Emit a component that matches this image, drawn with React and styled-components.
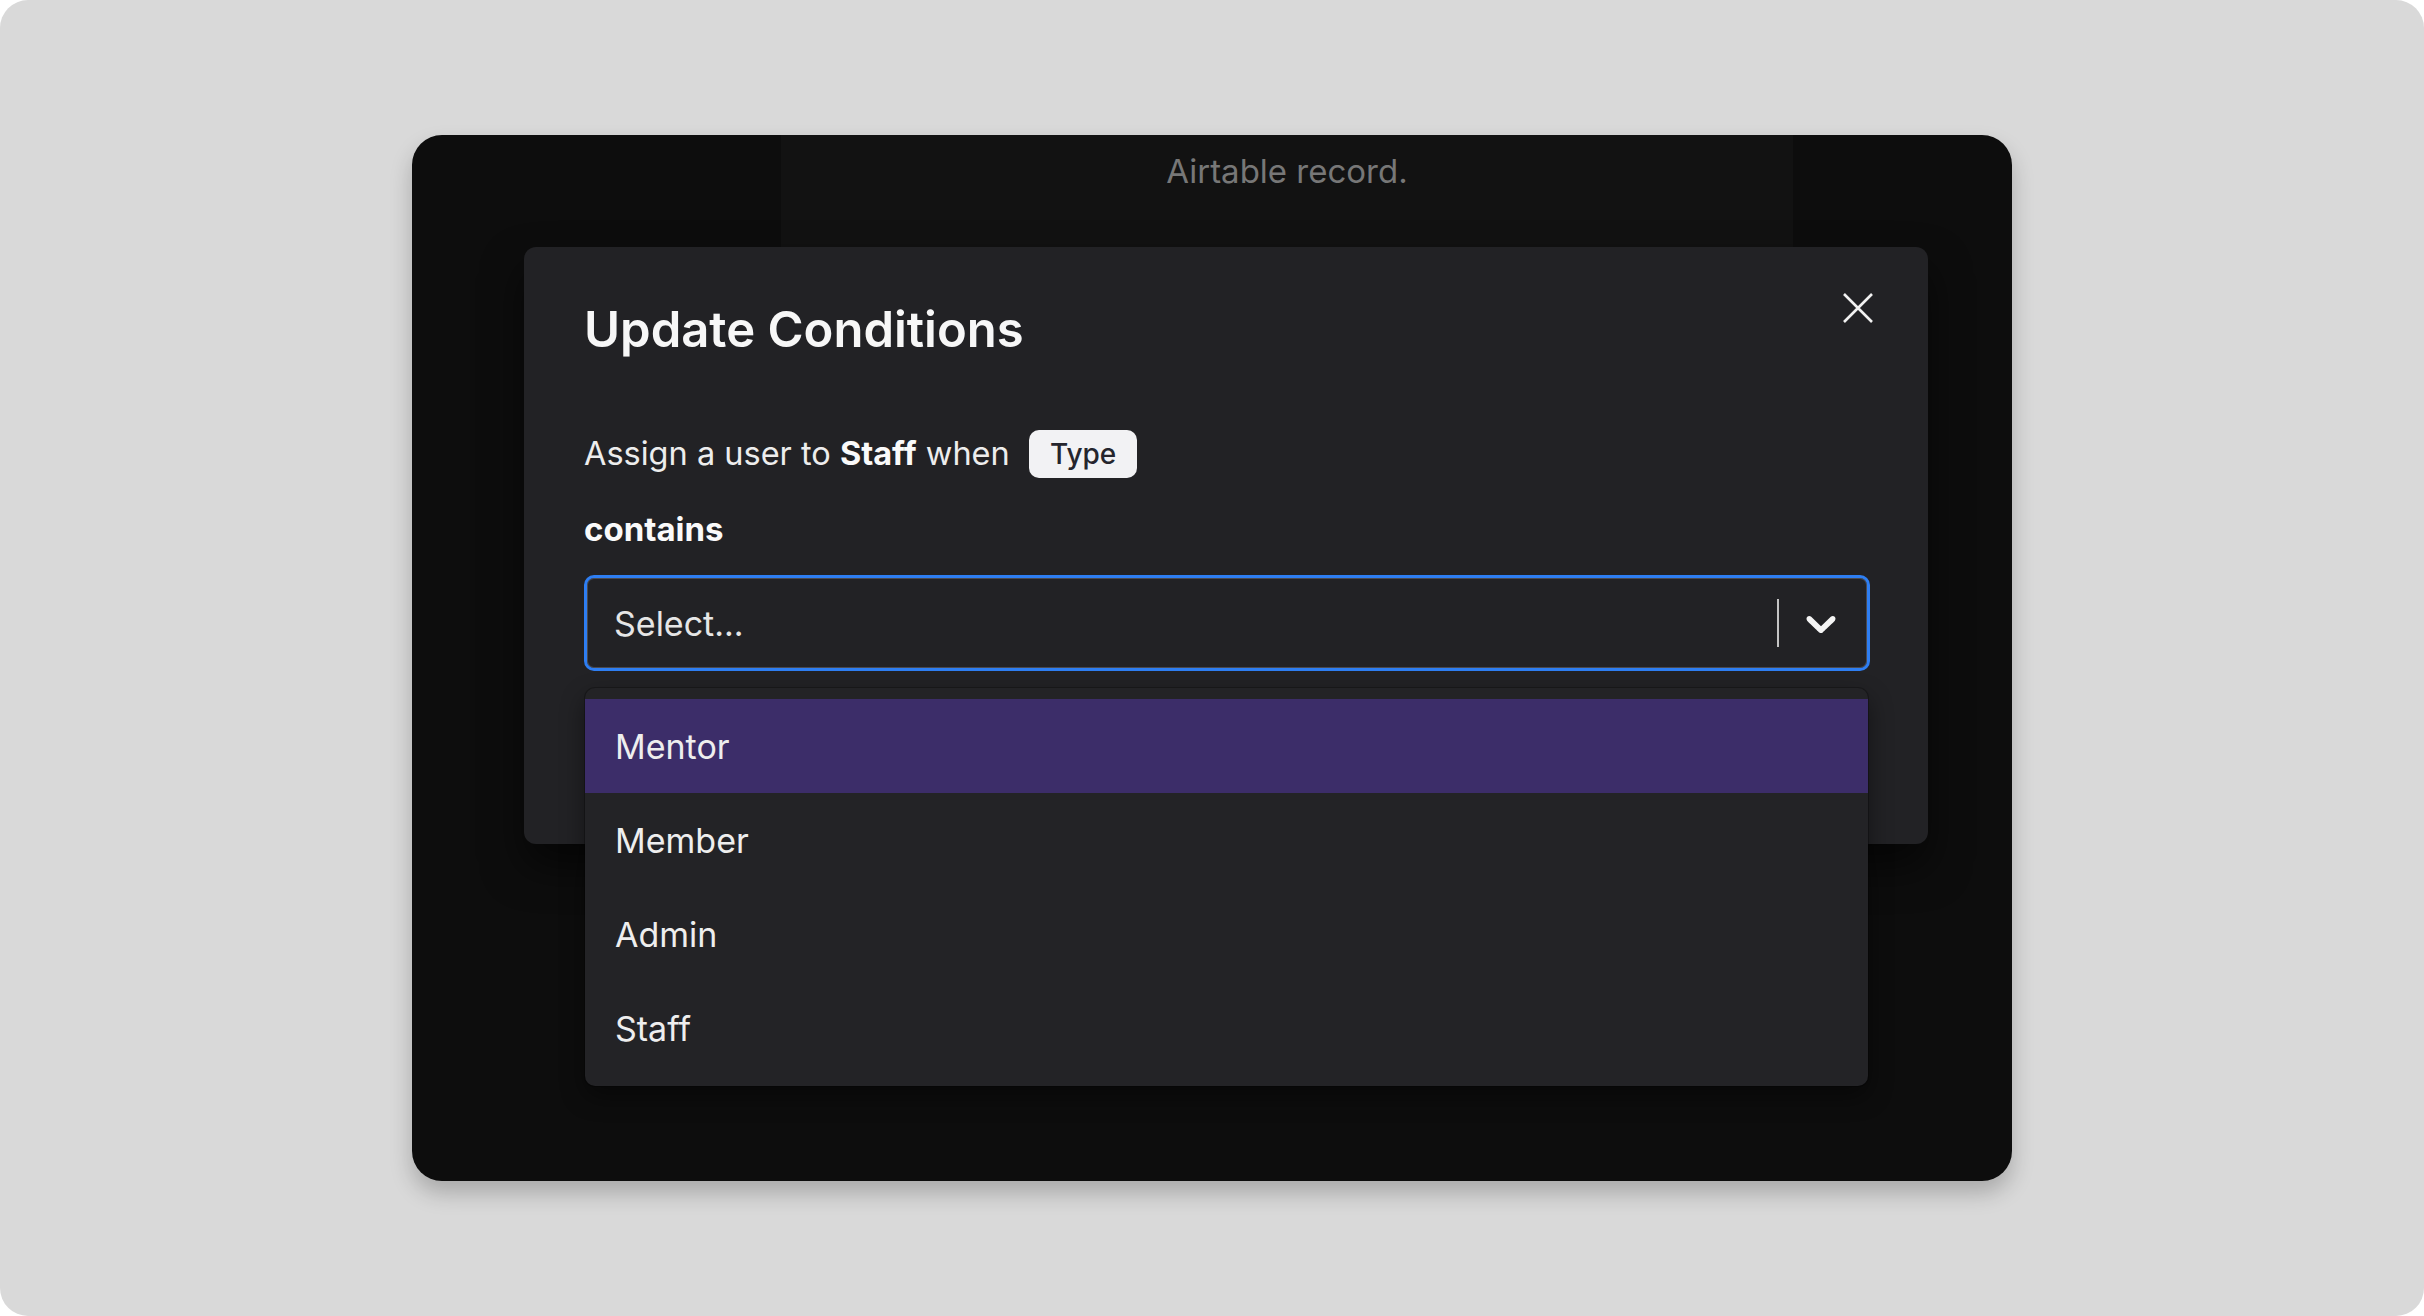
import React, { useState } from 'react';
import styled, { createGlobalStyle } from 'styled-components';

const GlobalStyle = createGlobalStyle`
  html, body {
    margin: 0;
    padding: 0;
    background: #ffffff;
  }
  body {
    font-family: Inter, "Noto Sans", sans-serif;
    -webkit-font-smoothing: antialiased;
  }
`;

const Page = styled.div`
  width: 2424px;
  height: 1316px;
  background: #d9d9d9;
  border-radius: 28px;
  display: flex;
  align-items: center;
  justify-content: center;
`;

const Frame = styled.div`
  width: 1600px;
  height: 1046px;
  background: #0d0d0d;
  border-radius: 30px;
  box-shadow: 0 12px 22px rgba(0, 0, 0, 0.22);
  display: flex;
  flex-direction: column;
  overflow: hidden;
`;

const BackStrip = styled.div`
  margin-left: 369px;
  width: 1012px;
  height: 112px;
  box-sizing: border-box;
  padding-top: 12px;
  background: #121212;
  text-align: center;
  font-size: 33px;
  line-height: 1.5;
  color: #777777;
`;

const Modal = styled.div`
  margin-left: 112px;
  width: 1404px;
  box-sizing: border-box;
  padding: 54px 58px 173px 60px;
  background: #222225;
  border-radius: 12px;
  box-shadow: 0 22px 40px rgba(0, 0, 0, 0.55);
  color: #f2f2f2;
`;

const Header = styled.div`
  display: flex;
  justify-content: space-between;
  align-items: flex-start;
`;

const Title = styled.h2`
  margin: 0;
  font-size: 49px;
  line-height: 1.2;
  font-weight: 600;
  color: #f7f7f7;
`;

const CloseButton = styled.button`
  margin: -8px -3px 0 0;
  padding: 0;
  width: 30px;
  height: 30px;
  border: none;
  background: none;
  color: #f2f2f2;
  cursor: pointer;
  display: flex;
`;

const AssignRow = styled.div`
  margin-top: 70px;
  display: flex;
  align-items: center;
  font-size: 32.5px;
  color: #ededed;
  white-space: pre;
`;

const Strong = styled.strong`
  font-weight: 700;
  color: #fafafa;
`;

const Pill = styled.span`
  margin-left: 10px;
  height: 48px;
  padding: 0 21px;
  display: inline-flex;
  align-items: center;
  border-radius: 10px;
  background: #f2f2f4;
  color: #25252d;
  font-size: 28px;
  font-weight: 500;
`;

const Label = styled.div`
  margin-top: 27px;
  font-size: 33px;
  line-height: 1.5;
  font-weight: 700;
  color: #fafafa;
`;

const SelectWrap = styled.div`
  position: relative;
  margin-top: 21px;
`;

const Control = styled.div`
  height: 96px;
  box-sizing: border-box;
  display: flex;
  align-items: center;
  border: 3px solid #2e7ef2;
  border-radius: 10px;
  box-shadow: inset 0 0 0 1px #4a4a50;
  background: #222225;
`;

const Placeholder = styled.span`
  flex: 1;
  padding-left: 27px;
  font-size: 34px;
  color: #e6e6e6;
`;

const Separator = styled.span`
  width: 2px;
  height: 48px;
  background: #c4c4c4;
`;

const Chevron = styled.svg`
  width: 50px;
  height: 50px;
  margin: 0 21px 0 17px;
  fill: #f5f5f5;
`;

const Menu = styled.div`
  position: absolute;
  top: calc(100% + 17px);
  left: 1px;
  right: 2px;
  padding: 11px 0;
  background: #232326;
  border-radius: 10px;
  box-shadow: 0 0 0 1px rgba(0, 0, 0, 0.25), 0 10px 24px rgba(0, 0, 0, 0.45);
`;

const Option = styled.div`
  height: 94px;
  display: flex;
  align-items: center;
  padding-left: 30px;
  font-size: 34px;
  color: #eeeeee;
  background: ${(p) => (p.$active ? '#3c2d69' : 'transparent')};
`;

const options = ['Mentor', 'Member', 'Admin', 'Staff'];

const App = () => {
  const [active, setActive] = useState(0);

  return (
    <>
      <GlobalStyle />
      <Page>
        <Frame>
          <BackStrip>Airtable record.</BackStrip>
          <Modal>
            <Header>
              <Title>Update Conditions</Title>
              <CloseButton aria-label="Close">
                <svg width="30" height="30" viewBox="0 0 30 30" fill="none" stroke="currentColor" strokeWidth="2.6">
                  <path d="M1 1 29 29M29 1 1 29" />
                </svg>
              </CloseButton>
            </Header>
            <AssignRow>
              Assign a user to <Strong>Staff</Strong> when <Pill>Type</Pill>
            </AssignRow>
            <Label>contains</Label>
            <SelectWrap>
              <Control>
                <Placeholder>Select...</Placeholder>
                <Separator />
                <Chevron viewBox="0 0 20 20">
                  <path d="M4.516 7.548c0.436-0.446 1.043-0.481 1.576 0l3.908 3.747 3.908-3.747c0.533-0.481 1.141-0.446 1.574 0 0.436 0.445 0.408 1.197 0 1.615-0.406 0.418-4.695 4.502-4.695 4.502-0.217 0.223-0.502 0.335-0.787 0.335s-0.57-0.112-0.789-0.335c0 0-4.287-4.084-4.695-4.502s-0.436-1.170 0-1.615z" />
                </Chevron>
              </Control>
              <Menu>
                {options.map((o, i) => (
                  <Option key={o} $active={i === active} onMouseEnter={() => setActive(i)}>
                    {o}
                  </Option>
                ))}
              </Menu>
            </SelectWrap>
          </Modal>
        </Frame>
      </Page>
    </>
  );
};

export default App;
